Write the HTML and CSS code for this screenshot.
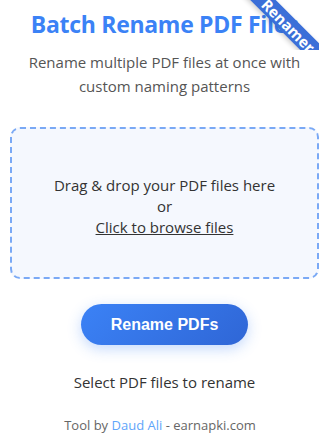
FILE: index.html
```html
<!DOCTYPE html>
<html lang="en">
<head>
<meta charset="utf-8">
<title>Batch Rename PDF Files</title>
<link rel="stylesheet" href="styles.css">
</head>
<body>
<div class="page">
  <div class="ribbon-wrap"><div class="ribbon">PDF Renamer</div></div>
  <div class="container">
    <h1 class="title">Batch Rename PDF Files</h1>
    <p class="subtitle">Rename multiple PDF files at once with custom naming patterns</p>
    <div class="dropzone">
      <p class="drop-text">Drag &amp; drop your PDF files here<br>or<br><span class="browse">Click to browse files</span></p>
    </div>
    <div class="actions">
      <button class="btn">Rename PDFs</button>
    </div>
    <p class="status">Select PDF files to rename</p>
    <footer class="footer">Tool by <a class="author" href="#">Daud Ali</a> - earnapki.com</footer>
  </div>
</div>
</body>
</html>
```
FILE: styles.css
```css
html, body {
  margin: 0;
  padding: 0;
  background: #ffffff;
}
body {
  font-family: "Open Sans", "Noto Sans", sans-serif;
  color: #333333;
}
.page {
  position: relative;
  overflow: hidden;
  width: 319px;
  height: 441px;
}
.ribbon-wrap {
  position: absolute;
  top: 0;
  right: 0;
  width: 80px;
  height: 50px;
  overflow: hidden;
  z-index: 2;
}
.ribbon {
  position: absolute;
  top: 5px;
  left: -32px;
  width: 140px;
  height: 18px;
  transform: rotate(45deg);
  background: #3b6fd8;
  color: #ffffff;
  font-weight: 700;
  font-size: 15px;
  line-height: 18px;
  text-align: center;
  box-shadow: 0 2px 5px rgba(0,0,0,0.2);
}
.container {
  padding: 0 0 0 10px;
  display: flex;
  flex-direction: column;
}
.title {
  margin: 8px 0 0;
  font-size: 23px;
  line-height: 32px;
  font-weight: 700;
  letter-spacing: -0.3px;
  color: #3b82f6;
  text-align: center;
  white-space: nowrap;
}
.subtitle {
  margin: 10px 0 0;
  font-size: 15px;
  line-height: 24px;
  color: #555555;
  text-align: center;
  padding: 0 10px;
}
.dropzone {
  margin-top: 29px;
  height: 142px;
  padding-top: 6px;
  border: 2px dashed #7aa9f5;
  border-radius: 10px;
  background: #f5f8fe;
  display: flex;
  align-items: center;
  justify-content: center;
}
.drop-text {
  margin: 0;
  font-size: 15px;
  line-height: 21px;
  text-align: center;
  color: #333333;
}
.browse {
  text-decoration: underline;
}
.actions {
  display: flex;
  justify-content: center;
  margin-top: 25px;
}
.btn {
  border: none;
  border-radius: 999px;
  width: 167px;
  height: 41px;
  background: linear-gradient(135deg, #3b82f6, #2f66d6);
  color: #ffffff;
  font-family: "Liberation Sans", Arial, sans-serif;
  font-weight: 700;
  font-size: 16px;
  box-shadow: 0 4px 14px rgba(59,130,246,0.3);
}
.status {
  margin: 26px 0 0;
  font-size: 15px;
  line-height: 22px;
  text-align: center;
  color: #333333;
}
.footer {
  margin: 22px 9px 0 0;
  font-size: 13px;
  line-height: 20px;
  text-align: center;
  color: #666666;
  padding-bottom: 14px;
  border-bottom: 1px solid #eeeeee;
}
.author {
  color: #60a5fa;
  text-decoration: none;
}
```
